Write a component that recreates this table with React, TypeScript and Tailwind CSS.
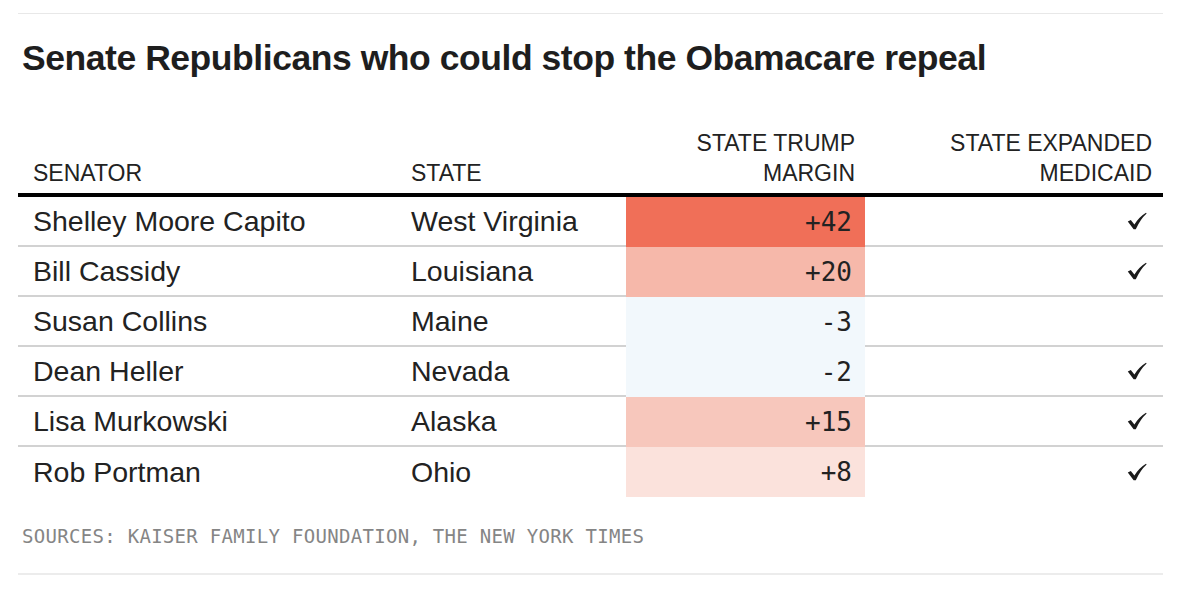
const rows = [
    { name: 'Shelley Moore Capito', state: 'West Virginia', margin: '+42', bg: 'bg-[#f06f58]', medicaid: true },
    { name: 'Bill Cassidy', state: 'Louisiana', margin: '+20', bg: 'bg-[#f6b8aa]', medicaid: true },
    { name: 'Susan Collins', state: 'Maine', margin: '-3', bg: 'bg-[#f2f8fc]', medicaid: false },
    { name: 'Dean Heller', state: 'Nevada', margin: '-2', bg: 'bg-[#f2f8fc]', medicaid: true },
    { name: 'Lisa Murkowski', state: 'Alaska', margin: '+15', bg: 'bg-[#f7c7bc]', medicaid: true },
    { name: 'Rob Portman', state: 'Ohio', margin: '+8', bg: 'bg-[#fbe2dc]', medicaid: true },
];

const sans = "font-['Liberation_Sans',Arial,sans-serif]";
const mono = "font-['DejaVu_Sans_Mono','Liberation_Mono',monospace]";
const cols = 'grid grid-cols-[380px_228px_239px_298px]';

function Check() {
    return (
        <svg width="20" height="18" viewBox="0 0 20 18" className="text-[#1a1a1a]">
            <path d="M0.8 9.6 L3.8 8 L7.4 12.6 Q11.8 5.2 19 0.8 L19.6 1.6 Q13.6 7 8.8 17.2 L6.6 17.2 Z" fill="currentColor" />
        </svg>
    );
}

export default function App() {
    return (
        <div className={`w-[1200px] h-[598px] bg-white text-[#222] ${sans}`}>
            <div className="ml-[18px] w-[1145px] pt-[13px]">
                <div className="border-t border-[#e8e8e8]" />
                <h1 className="mt-[24px] ml-[4px] text-[35.5px] leading-[40px] font-bold tracking-[-0.45px] text-[#1e1e1e]">
                    Senate Republicans who could stop the Obamacare repeal
                </h1>

                <div className={`${cols} mt-[50px] text-[23px] leading-[30px] text-[#222] pb-[5px] border-b-4 border-black items-end`}>
                    <div className="pl-[15px]">SENATOR</div>
                    <div className="pl-[13px]">STATE</div>
                    <div className="pr-[10px] text-right">
                        STATE TRUMP
                        <br />
                        MARGIN
                    </div>
                    <div className="pr-[11px] text-right">
                        STATE EXPANDED
                        <br />
                        MEDICAID
                    </div>
                </div>

                <div>
                    {rows.map((r, i) => {
                        const line = i < rows.length - 1 ? 'border-b-2 border-[#d2d2d2]' : '';
                        return (
                            <div key={r.name} className={`${cols} h-[50px] text-[28.5px]`}>
                                <div className={`pl-[15px] flex items-center ${line}`}>{r.name}</div>
                                <div className={`pl-[13px] flex items-center ${line}`}>{r.state}</div>
                                <div className={`${r.bg} ${mono} text-[26px] pr-[13px] flex items-center justify-end text-[#222]`}>
                                    {r.margin}
                                </div>
                                <div className={`pr-[16px] flex items-center justify-end ${line}`}>
                                    {r.medicaid && <Check />}
                                </div>
                            </div>
                        );
                    })}
                </div>

                <div className={`mt-[27px] ml-[4px] ${mono} text-[19px] tracking-[0.3px] leading-[24px] text-[#858585]`}>
                    SOURCES: KAISER FAMILY FOUNDATION, THE NEW YORK TIMES
                </div>
                <div className="mt-[25px] border-t-2 border-[#ececec]" />
            </div>
        </div>
    );
}
